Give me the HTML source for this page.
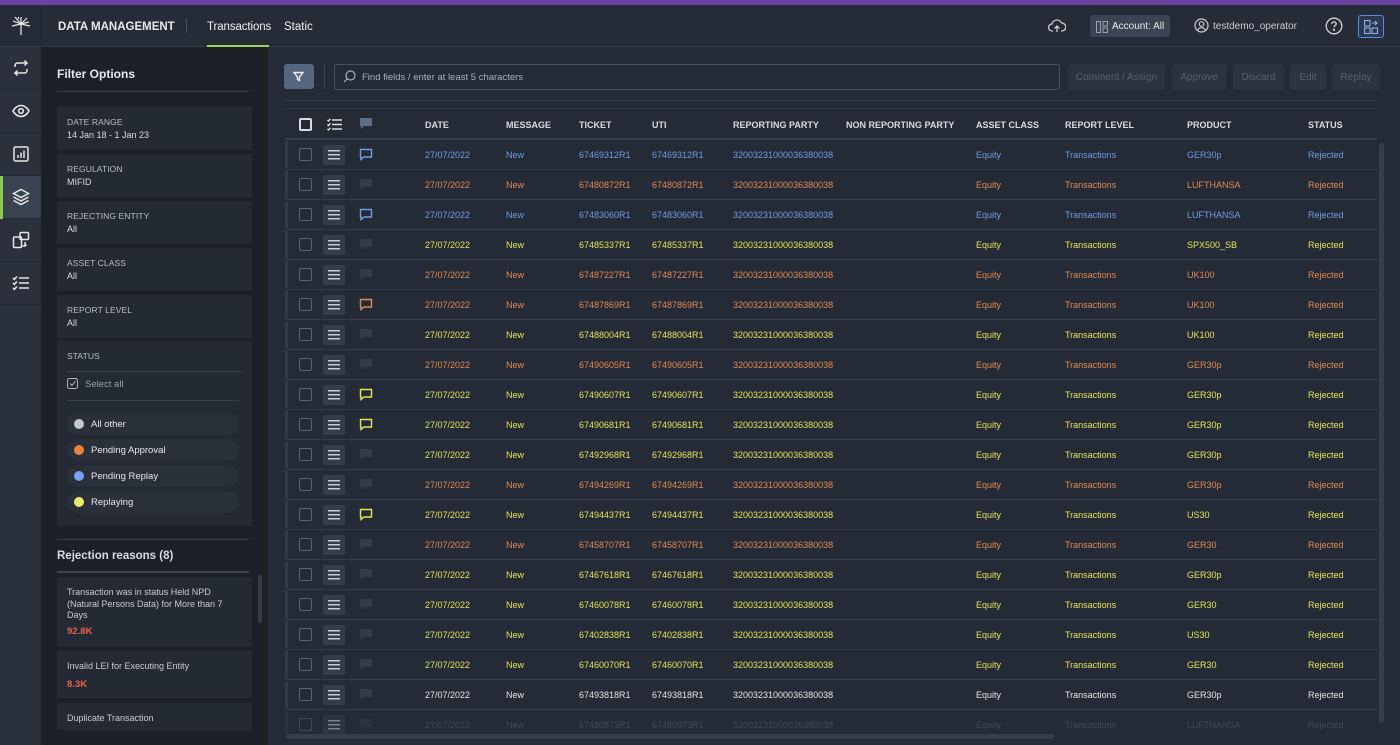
<!DOCTYPE html>
<html><head><meta charset="utf-8"><style>
*{box-sizing:border-box;margin:0;padding:0}
body{width:1400px;height:745px;overflow:hidden;background:#1b1e25;font-family:"Liberation Sans",sans-serif;color:#d8dbe0;position:relative}
.abs{position:absolute}
.top{left:0;top:0;width:1400px;height:5px;background:#6a44a3}
.hdr{left:0;top:5px;width:1400px;height:42px;background:#262c37;border-bottom:1px solid #353c48}
.rail{left:0;top:47px;width:41px;height:698px;background:#2a313c}
.rail .it{position:absolute;left:0;width:41px;height:43px;border-bottom:1px solid #222831;display:flex;align-items:center;justify-content:center}
.fp{left:41px;top:47px;width:227px;height:698px;background:#1c2027}
.main{left:268px;top:47px;width:1132px;height:698px;background:#252b36}
.box{position:absolute;left:57px;width:195px;background:#242a34;padding:10px 10px;font-size:9px}
.box .l{color:#b9bec6;font-size:8.5px;letter-spacing:.1px}
.box .v{color:#d8dbe0;margin-top:3px}
.pill{position:absolute;left:67px;width:172px;height:22px;border-radius:11px;background:#2a303a;font-size:9.5px;color:#e5e7ea;display:flex;align-items:center;padding-left:7px}
.pill i{width:10px;height:10px;border-radius:50%;margin-right:7px;display:inline-block}
.btn{position:absolute;top:64px;height:26px;background:#2c333e;border-radius:3px;color:#58606c;font-size:10px;display:flex;align-items:center;justify-content:center}
.row{position:absolute;left:285px;width:1092px;height:30px;border-bottom:1px solid #353d4a;font-size:9px}
.row:before{content:"";position:absolute;left:0;top:1px;width:3px;height:27px;background:#333a46}
.row span{position:absolute;top:10px;white-space:nowrap}
.cb{position:absolute;left:14px;top:8px;width:13px;height:13px;border:1.5px solid #5d636d;border-radius:2px}
.li{position:absolute;left:38px;top:5px;width:22px;height:20px;background:#343c48;border-radius:2px}
.li:after{content:"";position:absolute;left:5px;top:5px;width:12px;height:10px;background:linear-gradient(#c8ccd2 0 1.5px,transparent 1.5px 4px,#c8ccd2 4px 5.5px,transparent 5.5px 8px,#c8ccd2 8px 9.5px,transparent 9.5px)}
.cm{position:absolute;left:74px;top:8px}
.hd{position:absolute;left:285px;top:108px;width:1092px;height:32px;border-bottom:2px solid #353d4a;border-top:1px solid #303744;font-size:9px;font-weight:bold;color:#d8dbe0}
.hd span{position:absolute;top:11px}
.B{color:#6f9ce6}.O{color:#e08a52}.Y{color:#e4e45a}.W{color:#e2e4e8}.D{color:#5a616c}
</style></head><body>
<div class="abs top"></div>
<div class="abs hdr">
 <svg class="abs" style="left:8px;top:8px" width="26" height="26" viewBox="0 0 26 26" fill="none" stroke="#e8e8e8" stroke-width="1.2"><path d="M13 4v18M13 11L5 8M13 11l8-2M13 11L7 4M13 11l6-6M13 11l-9 2M13 11l9 2M10 4l1 2"/></svg>
 <div class="abs" style="left:41px;top:0;width:1px;height:42px;background:#1f242d"></div>
 <div class="abs" style="left:58px;top:16px;font-size:11.5px;font-weight:bold;color:#e8e8e8">DATA MANAGEMENT</div>
 <div class="abs" style="left:186px;top:14px;width:1px;height:14px;background:#4a515c"></div>
 <div class="abs" style="left:207px;top:16px;font-size:11.5px;color:#f0f0f0;letter-spacing:-.1px">Transactions</div>
 <div class="abs" style="left:207px;top:40px;width:62px;height:2px;background:#9cd45a"></div>
 <div class="abs" style="left:284px;top:16px;font-size:11.5px;color:#f0f0f0">Static</div>
 <svg class="abs" style="left:1048px;top:14px" width="18" height="14" viewBox="0 0 18 14" fill="none" stroke="#c8ccd2" stroke-width="1.3"><path d="M5 12H4a3.5 3.5 0 010-7 5 5 0 019.5-1A3.5 3.5 0 0114 12h-1M9 13V7M6.5 9.5L9 7l2.5 2.5"/></svg>
 <div class="abs" style="left:1090px;top:10px;width:80px;height:22px;background:#3b4452;border-radius:3px;font-size:10px;color:#e8e8e8;padding:6px 0 0 22px">Account: All</div>
 <svg class="abs" style="left:1096px;top:16px" width="12" height="12" viewBox="0 0 12 12" fill="none" stroke="#9aa2ae" stroke-width="1"><rect x=".5" y=".5" width="4" height="11"/><rect x="7" y=".5" width="4.5" height="4.5"/><rect x="7" y="7" width="4.5" height="4.5"/></svg>
 <svg class="abs" style="left:1194px;top:13px" width="15" height="15" viewBox="0 0 15 15" fill="none" stroke="#c8ccd2" stroke-width="1.2"><circle cx="7.5" cy="7.5" r="6.5"/><circle cx="7.5" cy="6" r="2.3"/><path d="M3.5 12.3c1-2 2.3-2.6 4-2.6s3 .6 4 2.6"/></svg>
 <div class="abs" style="left:1213px;top:16px;font-size:10px;color:#c8ccd2">testdemo_operator</div>
 <svg class="abs" style="left:1325px;top:12px" width="18" height="18" viewBox="0 0 18 18" fill="none" stroke="#d0d4da" stroke-width="1.3"><circle cx="9" cy="9" r="7.8"/><path d="M6.8 7a2.2 2.2 0 114.4 0c0 1.5-2.2 1.6-2.2 3.3"/><circle cx="9" cy="12.8" r=".5" fill="#d0d4da"/></svg>
 <div class="abs" style="left:1358px;top:10px;width:26px;height:23px;border:1.5px solid #5b8be0;border-radius:3px;background:#2c3850"></div>
 <svg class="abs" style="left:1364px;top:15px" width="14" height="14" viewBox="0 0 14 14" fill="none" stroke="#8fb0ea" stroke-width="1.1"><rect x=".5" y=".5" width="5.5" height="5.5"/><rect x="8" y="8" width="5.5" height="5.5"/><rect x=".5" y="8" width="5.5" height="5.5"/><path d="M8 3h5M11 1l2 2-2 2"/></svg>
</div>
<div class="abs rail">
 <div class="it" style="top:0"><svg width="18" height="18" viewBox="0 0 18 18" fill="none" stroke="#e6e6e6" stroke-width="1.5"><path d="M3 8V6.5A2.5 2.5 0 015.5 4H15M12.5 1.5L15 4l-2.5 2.5M15 10v1.5A2.5 2.5 0 0112.5 14H3M5.5 16.5L3 14l2.5-2.5"/></svg></div>
 <div class="it" style="top:43px"><svg width="18" height="14" viewBox="0 0 18 14" fill="none" stroke="#e6e6e6" stroke-width="1.6"><path d="M1 7s3-5.5 8-5.5S17 7 17 7s-3 5.5-8 5.5S1 7 1 7z"/><circle cx="9" cy="7" r="2.3"/></svg></div>
 <div class="it" style="top:86px"><svg width="16" height="16" viewBox="0 0 16 16" fill="none" stroke="#e6e6e6" stroke-width="1.5"><rect x="1" y="1" width="14" height="14" rx="1.5"/><path d="M5 12V9M8 12V6.5M11 12V4.5"/></svg></div>
 <div class="it" style="top:129px;background:#3a4350"><div style="position:absolute;left:0;top:0;width:3px;height:43px;background:#8fcb52"></div><svg width="18" height="18" viewBox="0 0 18 18" fill="none" stroke="#e6e6e6" stroke-width="1.5"><path d="M9 1.5l7.5 4L9 9.5l-7.5-4z"/><path d="M1.5 9L9 13l7.5-4M1.5 12.5L9 16.5l7.5-4"/></svg></div>
 <div class="it" style="top:172px"><svg width="18" height="18" viewBox="0 0 18 18" fill="none" stroke="#e6e6e6" stroke-width="1.5"><rect x="1.5" y="6" width="8" height="10.5" rx="1"/><rect x="8" y="1.5" width="8.5" height="7" rx="1"/><path d="M13 11v4h-2.5M14.5 13.5l-1.5 1.5"/></svg></div>
 <div class="it" style="top:215px"><svg width="18" height="16" viewBox="0 0 18 16" fill="none" stroke="#e6e6e6" stroke-width="1.6"><path d="M7 3h10M7 8h10M7 13h10M1 3l1.3 1.3L5 1.5M1 8l1.3 1.3L5 6.5M1 13l1.3 1.3L5 11.5"/></svg></div>
</div>
<div class="abs fp"></div>
<div class="abs" style="left:57px;top:67px;font-size:12px;font-weight:bold;color:#e6e8eb">Filter Options</div>
<div class="abs" style="left:57px;top:91px;width:192px;height:1px;background:#3d434d"></div>
<div class="box" style="top:107px;height:43px"><div class="l">DATE RANGE</div><div class="v">14 Jan 18 - 1 Jan 23</div></div>
<div class="box" style="top:154px;height:43px"><div class="l">REGULATION</div><div class="v">MIFID</div></div>
<div class="box" style="top:201px;height:43px"><div class="l">REJECTING ENTITY</div><div class="v">All</div></div>
<div class="box" style="top:248px;height:43px"><div class="l">ASSET CLASS</div><div class="v">All</div></div>
<div class="box" style="top:295px;height:43px"><div class="l">REPORT LEVEL</div><div class="v">All</div></div>
<div class="box" style="top:341px;height:185px"><div class="l">STATUS</div></div>
<div class="abs" style="left:67px;top:371px;width:175px;height:1px;background:#3a404a"></div>
<svg class="abs" style="left:67px;top:378px" width="11" height="11" viewBox="0 0 11 11" fill="none" stroke="#b0b5bd" stroke-width="1"><rect x=".5" y=".5" width="10" height="10" rx="2"/><path d="M3 5.5l2 2 3.5-4.5"/></svg>
<div class="abs" style="left:85px;top:379px;font-size:9.5px;color:#9ca2ab">Select all</div>
<div class="abs" style="left:67px;top:400px;width:172px;height:1px;background:#3a404a"></div>
<div class="pill" style="top:413px"><i style="background:#c5c7cb"></i>All other</div>
<div class="pill" style="top:439px"><i style="background:#e8823c"></i>Pending Approval</div>
<div class="pill" style="top:465px"><i style="background:#76a1ee"></i>Pending Replay</div>
<div class="pill" style="top:491px"><i style="background:#ecec6a"></i>Replaying</div>
<div class="abs" style="left:57px;top:539px;width:192px;height:1px;background:#3d434d"></div>
<div class="abs" style="left:57px;top:550px;font-size:11.5px;font-weight:bold;color:#d8dbe0">Rejection reasons (8)</div>
<div class="abs" style="left:57px;top:571px;width:192px;height:2px;background:#3d434d"></div>
<div class="abs" style="left:258px;top:575px;width:4px;height:48px;background:#353b45;border-radius:2px"></div>
<div class="box" style="top:577px;height:70px;color:#c8ccd2;line-height:11.5px">Transaction was in status Held NPD (Natural Persons Data) for More than 7 Days<div style="color:#e8604c;font-weight:bold;margin-top:4px;font-size:9.5px">92.8K</div></div>
<div class="box" style="top:651px;height:47px;color:#c8ccd2">Invalid LEI for Executing Entity<div style="color:#e8604c;font-weight:bold;margin-top:8px;font-size:9.5px">8.3K</div></div>
<div class="box" style="top:703px;height:27px;color:#c8ccd2">Duplicate Transaction</div>

<div class="abs main"></div>
<div class="abs" style="left:284px;top:64px;width:30px;height:25px;background:#56667e;border-radius:3px"></div>
<svg class="abs" style="left:293px;top:71px" width="11" height="11" viewBox="0 0 11 11" fill="none" stroke="#f0f0f0" stroke-width="1.4"><path d="M1 1.5h9L6.5 6v3.5L4.5 8.5V6z"/></svg>
<div class="abs" style="left:324px;top:64px;width:1px;height:25px;background:#3b424d"></div>
<div class="abs" style="left:334px;top:64px;width:726px;height:26px;border:1px solid #4a515d;border-radius:3px"></div>
<svg class="abs" style="left:343px;top:70px" width="13" height="13" viewBox="0 0 13 13" fill="none" stroke="#a8aeb7" stroke-width="1.2"><circle cx="7.5" cy="5.5" r="4.5"/><path d="M4.3 8.7L1 12"/></svg>
<div class="abs" style="left:362px;top:72px;font-size:9.5px;color:#a8aeb7">Find fields / enter at least 5 characters</div>
<div class="btn" style="left:1068px;width:97px">Comment / Assign</div>
<div class="btn" style="left:1172px;width:54px">Approve</div>
<div class="btn" style="left:1233px;width:51px">Discard</div>
<div class="btn" style="left:1290px;width:36px">Edit</div>
<div class="btn" style="left:1332px;width:48px">Replay</div>
<div class="abs" style="left:285px;top:100px;width:1092px;height:1px;background:#323947"></div>

<div class="hd">
 <div style="position:absolute;left:14px;top:9px;width:13px;height:13px;border:2px solid #d8dbe0;border-radius:2px"></div>
 <svg style="position:absolute;left:42px;top:9px" width="15" height="13" viewBox="0 0 15 13" fill="none" stroke="#e0e0e0" stroke-width="1.4"><path d="M5 2h10M5 6.5h10M5 11h10M.5 2l1 1L3.5 .8M.5 6.5l1 1 2-2.2M.5 11l1 1 2-2.2"/></svg>
 <svg style="position:absolute;left:74px;top:8px" width="14" height="13" viewBox="0 0 14 13"><path d="M1 1h12v8H5l-3 3V9H1z" fill="#5d6d86"/></svg>
 <span style="left:140px">DATE</span><span style="left:221px">MESSAGE</span><span style="left:294px">TICKET</span><span style="left:367px">UTI</span><span style="left:448px">REPORTING PARTY</span><span style="left:561px">NON REPORTING PARTY</span><span style="left:691px">ASSET CLASS</span><span style="left:780px">REPORT LEVEL</span><span style="left:902px">PRODUCT</span><span style="left:1023px">STATUS</span>
</div>
<div class="abs" style="left:1379px;top:143px;width:5px;height:580px;background:#363d49;border-radius:3px"></div>
<div class="abs" style="left:286px;top:734px;width:768px;height:5px;background:#363d49;border-radius:3px"></div>

<div id="rows">
<div class="row B" style="top:140px"><div class="cb"></div><div class="li"></div><svg class="cm" width="14" height="13"><path d="M1.5 1.5h11v7.5H5l-3 2.5V9h-.5z" fill="none" stroke="#6f9ce6" stroke-width="1.4"/></svg><span style="left:140px">27/07/2022</span><span style="left:221px">New</span><span style="left:294px">67469312R1</span><span style="left:367px">67469312R1</span><span style="left:448px">32003231000036380038</span><span style="left:691px">Equity</span><span style="left:780px">Transactions</span><span style="left:902px">GER30p</span><span style="left:1023px">Rejected</span></div>
<div class="row O" style="top:170px"><div class="cb"></div><div class="li"></div><svg class="cm" width="14" height="13"><path d="M1 1h12v8H5l-3 3V9H1z" fill="#343b46"/></svg><span style="left:140px">27/07/2022</span><span style="left:221px">New</span><span style="left:294px">67480872R1</span><span style="left:367px">67480872R1</span><span style="left:448px">32003231000036380038</span><span style="left:691px">Equity</span><span style="left:780px">Transactions</span><span style="left:902px">LUFTHANSA</span><span style="left:1023px">Rejected</span></div>
<div class="row B" style="top:200px"><div class="cb"></div><div class="li"></div><svg class="cm" width="14" height="13"><path d="M1.5 1.5h11v7.5H5l-3 2.5V9h-.5z" fill="none" stroke="#6f9ce6" stroke-width="1.4"/></svg><span style="left:140px">27/07/2022</span><span style="left:221px">New</span><span style="left:294px">67483060R1</span><span style="left:367px">67483060R1</span><span style="left:448px">32003231000036380038</span><span style="left:691px">Equity</span><span style="left:780px">Transactions</span><span style="left:902px">LUFTHANSA</span><span style="left:1023px">Rejected</span></div>
<div class="row Y" style="top:230px"><div class="cb"></div><div class="li"></div><svg class="cm" width="14" height="13"><path d="M1 1h12v8H5l-3 3V9H1z" fill="#343b46"/></svg><span style="left:140px">27/07/2022</span><span style="left:221px">New</span><span style="left:294px">67485337R1</span><span style="left:367px">67485337R1</span><span style="left:448px">32003231000036380038</span><span style="left:691px">Equity</span><span style="left:780px">Transactions</span><span style="left:902px">SPX500_SB</span><span style="left:1023px">Rejected</span></div>
<div class="row O" style="top:260px"><div class="cb"></div><div class="li"></div><svg class="cm" width="14" height="13"><path d="M1 1h12v8H5l-3 3V9H1z" fill="#343b46"/></svg><span style="left:140px">27/07/2022</span><span style="left:221px">New</span><span style="left:294px">67487227R1</span><span style="left:367px">67487227R1</span><span style="left:448px">32003231000036380038</span><span style="left:691px">Equity</span><span style="left:780px">Transactions</span><span style="left:902px">UK100</span><span style="left:1023px">Rejected</span></div>
<div class="row O" style="top:290px"><div class="cb"></div><div class="li"></div><svg class="cm" width="14" height="13"><path d="M1.5 1.5h11v7.5H5l-3 2.5V9h-.5z" fill="none" stroke="#e08a52" stroke-width="1.4"/></svg><span style="left:140px">27/07/2022</span><span style="left:221px">New</span><span style="left:294px">67487869R1</span><span style="left:367px">67487869R1</span><span style="left:448px">32003231000036380038</span><span style="left:691px">Equity</span><span style="left:780px">Transactions</span><span style="left:902px">UK100</span><span style="left:1023px">Rejected</span></div>
<div class="row Y" style="top:320px"><div class="cb"></div><div class="li"></div><svg class="cm" width="14" height="13"><path d="M1 1h12v8H5l-3 3V9H1z" fill="#343b46"/></svg><span style="left:140px">27/07/2022</span><span style="left:221px">New</span><span style="left:294px">67488004R1</span><span style="left:367px">67488004R1</span><span style="left:448px">32003231000036380038</span><span style="left:691px">Equity</span><span style="left:780px">Transactions</span><span style="left:902px">UK100</span><span style="left:1023px">Rejected</span></div>
<div class="row O" style="top:350px"><div class="cb"></div><div class="li"></div><svg class="cm" width="14" height="13"><path d="M1 1h12v8H5l-3 3V9H1z" fill="#343b46"/></svg><span style="left:140px">27/07/2022</span><span style="left:221px">New</span><span style="left:294px">67490605R1</span><span style="left:367px">67490605R1</span><span style="left:448px">32003231000036380038</span><span style="left:691px">Equity</span><span style="left:780px">Transactions</span><span style="left:902px">GER30p</span><span style="left:1023px">Rejected</span></div>
<div class="row Y" style="top:380px"><div class="cb"></div><div class="li"></div><svg class="cm" width="14" height="13"><path d="M1.5 1.5h11v7.5H5l-3 2.5V9h-.5z" fill="none" stroke="#e4e45a" stroke-width="1.4"/></svg><span style="left:140px">27/07/2022</span><span style="left:221px">New</span><span style="left:294px">67490607R1</span><span style="left:367px">67490607R1</span><span style="left:448px">32003231000036380038</span><span style="left:691px">Equity</span><span style="left:780px">Transactions</span><span style="left:902px">GER30p</span><span style="left:1023px">Rejected</span></div>
<div class="row Y" style="top:410px"><div class="cb"></div><div class="li"></div><svg class="cm" width="14" height="13"><path d="M1.5 1.5h11v7.5H5l-3 2.5V9h-.5z" fill="none" stroke="#e4e45a" stroke-width="1.4"/></svg><span style="left:140px">27/07/2022</span><span style="left:221px">New</span><span style="left:294px">67490681R1</span><span style="left:367px">67490681R1</span><span style="left:448px">32003231000036380038</span><span style="left:691px">Equity</span><span style="left:780px">Transactions</span><span style="left:902px">GER30p</span><span style="left:1023px">Rejected</span></div>
<div class="row Y" style="top:440px"><div class="cb"></div><div class="li"></div><svg class="cm" width="14" height="13"><path d="M1 1h12v8H5l-3 3V9H1z" fill="#343b46"/></svg><span style="left:140px">27/07/2022</span><span style="left:221px">New</span><span style="left:294px">67492968R1</span><span style="left:367px">67492968R1</span><span style="left:448px">32003231000036380038</span><span style="left:691px">Equity</span><span style="left:780px">Transactions</span><span style="left:902px">GER30p</span><span style="left:1023px">Rejected</span></div>
<div class="row O" style="top:470px"><div class="cb"></div><div class="li"></div><svg class="cm" width="14" height="13"><path d="M1 1h12v8H5l-3 3V9H1z" fill="#343b46"/></svg><span style="left:140px">27/07/2022</span><span style="left:221px">New</span><span style="left:294px">67494269R1</span><span style="left:367px">67494269R1</span><span style="left:448px">32003231000036380038</span><span style="left:691px">Equity</span><span style="left:780px">Transactions</span><span style="left:902px">GER30p</span><span style="left:1023px">Rejected</span></div>
<div class="row Y" style="top:500px"><div class="cb"></div><div class="li"></div><svg class="cm" width="14" height="13"><path d="M1.5 1.5h11v7.5H5l-3 2.5V9h-.5z" fill="none" stroke="#e4e45a" stroke-width="1.4"/></svg><span style="left:140px">27/07/2022</span><span style="left:221px">New</span><span style="left:294px">67494437R1</span><span style="left:367px">67494437R1</span><span style="left:448px">32003231000036380038</span><span style="left:691px">Equity</span><span style="left:780px">Transactions</span><span style="left:902px">US30</span><span style="left:1023px">Rejected</span></div>
<div class="row O" style="top:530px"><div class="cb"></div><div class="li"></div><svg class="cm" width="14" height="13"><path d="M1 1h12v8H5l-3 3V9H1z" fill="#343b46"/></svg><span style="left:140px">27/07/2022</span><span style="left:221px">New</span><span style="left:294px">67458707R1</span><span style="left:367px">67458707R1</span><span style="left:448px">32003231000036380038</span><span style="left:691px">Equity</span><span style="left:780px">Transactions</span><span style="left:902px">GER30</span><span style="left:1023px">Rejected</span></div>
<div class="row Y" style="top:560px"><div class="cb"></div><div class="li"></div><svg class="cm" width="14" height="13"><path d="M1 1h12v8H5l-3 3V9H1z" fill="#343b46"/></svg><span style="left:140px">27/07/2022</span><span style="left:221px">New</span><span style="left:294px">67467618R1</span><span style="left:367px">67467618R1</span><span style="left:448px">32003231000036380038</span><span style="left:691px">Equity</span><span style="left:780px">Transactions</span><span style="left:902px">GER30p</span><span style="left:1023px">Rejected</span></div>
<div class="row Y" style="top:590px"><div class="cb"></div><div class="li"></div><svg class="cm" width="14" height="13"><path d="M1 1h12v8H5l-3 3V9H1z" fill="#343b46"/></svg><span style="left:140px">27/07/2022</span><span style="left:221px">New</span><span style="left:294px">67460078R1</span><span style="left:367px">67460078R1</span><span style="left:448px">32003231000036380038</span><span style="left:691px">Equity</span><span style="left:780px">Transactions</span><span style="left:902px">GER30</span><span style="left:1023px">Rejected</span></div>
<div class="row Y" style="top:620px"><div class="cb"></div><div class="li"></div><svg class="cm" width="14" height="13"><path d="M1 1h12v8H5l-3 3V9H1z" fill="#343b46"/></svg><span style="left:140px">27/07/2022</span><span style="left:221px">New</span><span style="left:294px">67402838R1</span><span style="left:367px">67402838R1</span><span style="left:448px">32003231000036380038</span><span style="left:691px">Equity</span><span style="left:780px">Transactions</span><span style="left:902px">US30</span><span style="left:1023px">Rejected</span></div>
<div class="row Y" style="top:650px"><div class="cb"></div><div class="li"></div><svg class="cm" width="14" height="13"><path d="M1 1h12v8H5l-3 3V9H1z" fill="#343b46"/></svg><span style="left:140px">27/07/2022</span><span style="left:221px">New</span><span style="left:294px">67460070R1</span><span style="left:367px">67460070R1</span><span style="left:448px">32003231000036380038</span><span style="left:691px">Equity</span><span style="left:780px">Transactions</span><span style="left:902px">GER30</span><span style="left:1023px">Rejected</span></div>
<div class="row W" style="top:680px"><div class="cb"></div><div class="li"></div><svg class="cm" width="14" height="13"><path d="M1 1h12v8H5l-3 3V9H1z" fill="#343b46"/></svg><span style="left:140px">27/07/2022</span><span style="left:221px">New</span><span style="left:294px">67493818R1</span><span style="left:367px">67493818R1</span><span style="left:448px">32003231000036380038</span><span style="left:691px">Equity</span><span style="left:780px">Transactions</span><span style="left:902px">GER30p</span><span style="left:1023px">Rejected</span></div>
<div class="row D" style="top:710px;border-bottom:none;opacity:.55"><div class="cb"></div><div class="li"></div><svg class="cm" width="14" height="13"><path d="M1 1h12v8H5l-3 3V9H1z" fill="#343b46"/></svg><span style="left:140px">27/07/2022</span><span style="left:221px">New</span><span style="left:294px">67480873R1</span><span style="left:367px">67480873R1</span><span style="left:448px">32003231000036380038</span><span style="left:691px">Equity</span><span style="left:780px">Transactions</span><span style="left:902px">LUFTHANSA</span><span style="left:1023px">Rejected</span></div>
</div>
</body></html>
